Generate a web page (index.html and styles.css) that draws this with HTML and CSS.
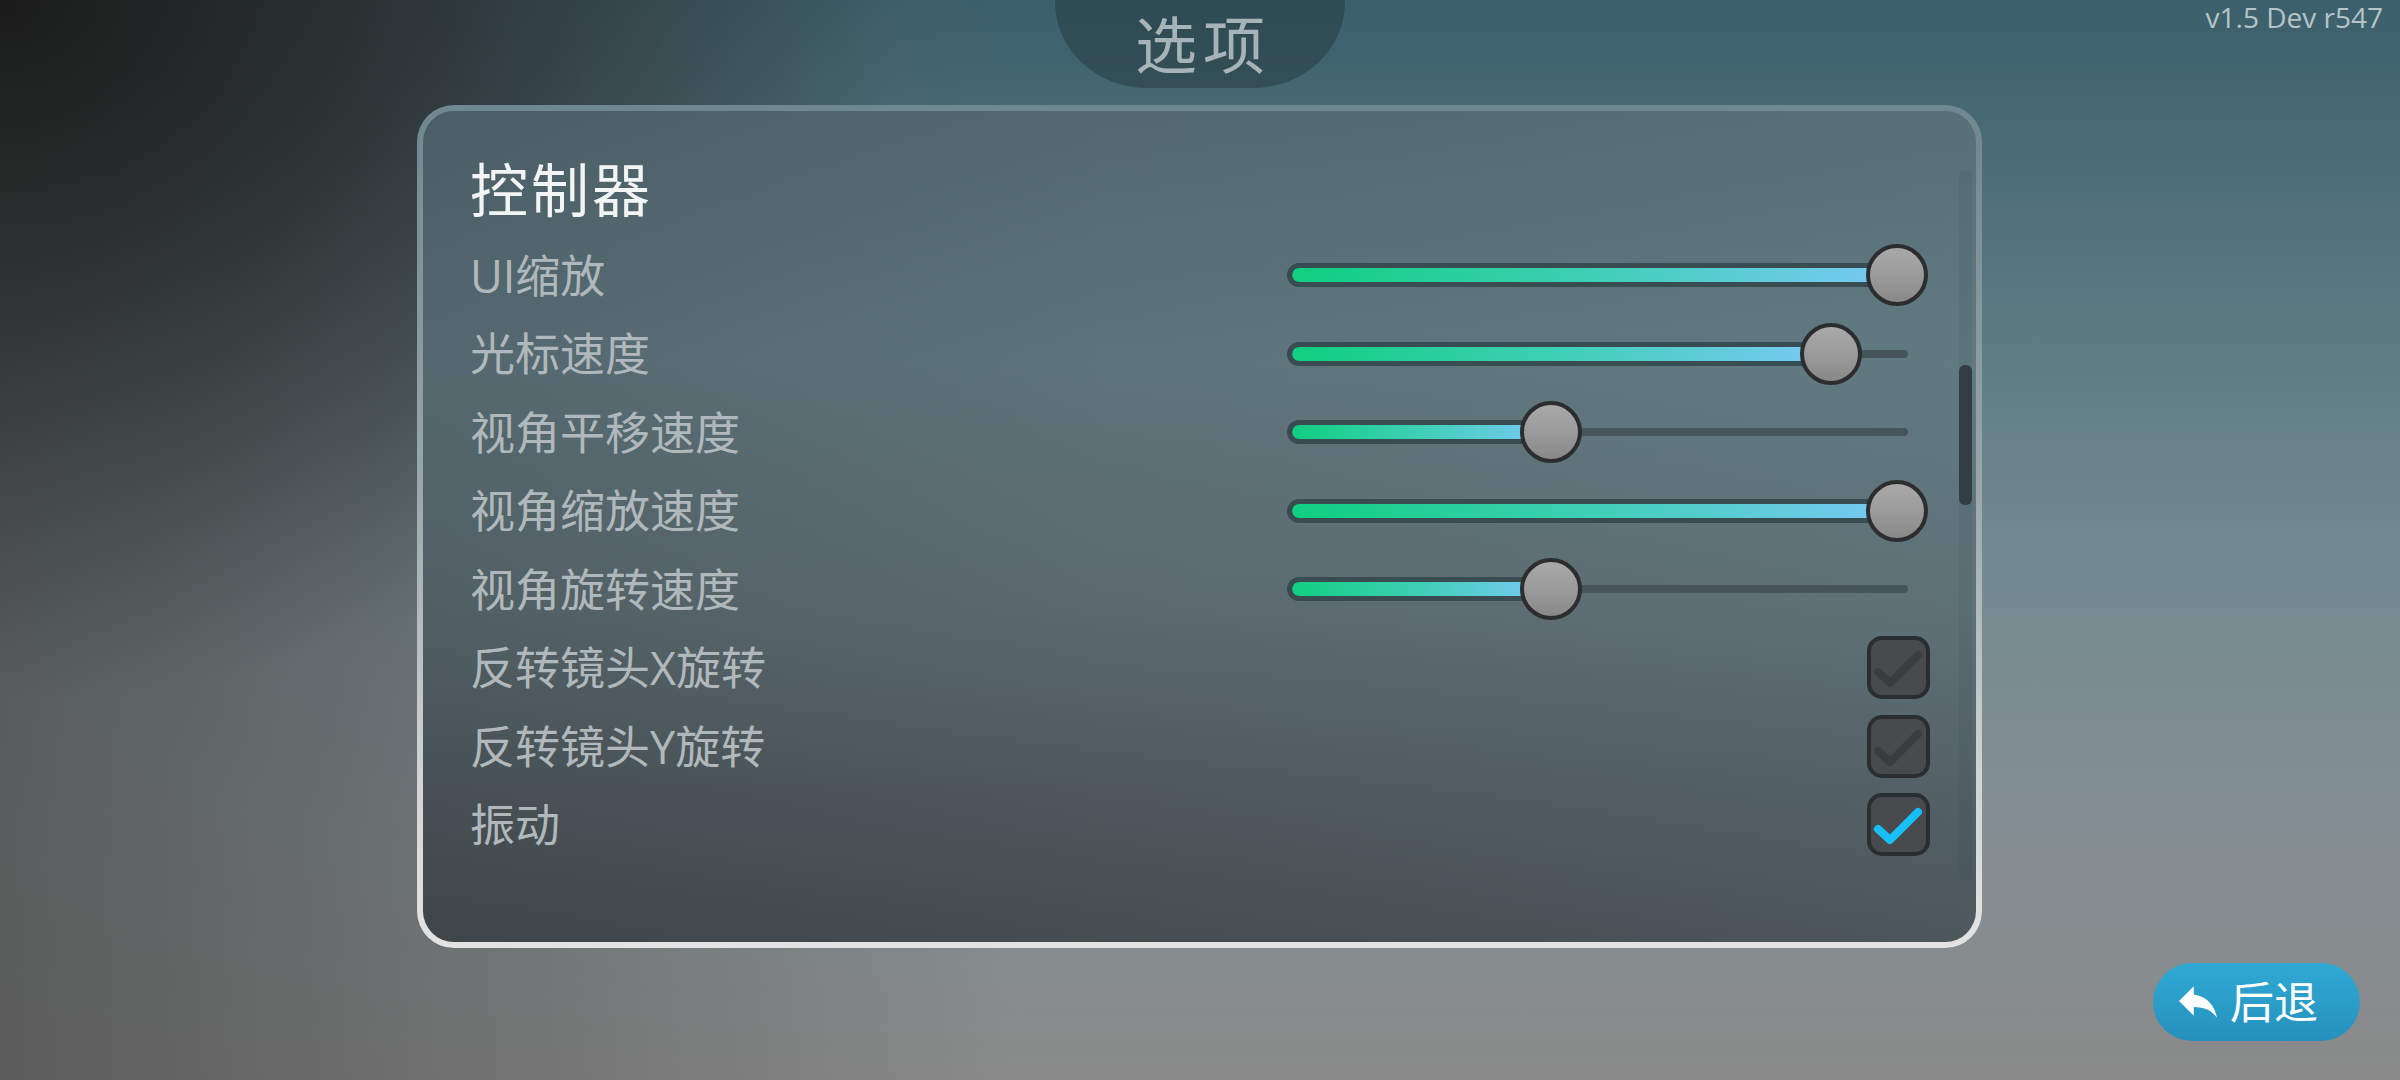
FILE: index.html
```html
<!DOCTYPE html>
<html lang="zh-CN">
<head>
<meta charset="utf-8">
<title>选项</title>
<link rel="stylesheet" href="styles.css">
</head>
<body>
<div class="screen">
  <header class="topbar">
    <div class="tab">选项</div>
    <div class="version">v1.5 Dev r547</div>
  </header>

  <main class="panel-frame">
    <div class="panel">
      <div class="content">
        <h1 class="section-title">控制器</h1>

        <div class="row">
          <span class="label">UI缩放</span>
          <div class="slider" style="--v:1">
            <div class="fill"></div><div class="thumb"></div>
          </div>
        </div>
        <div class="row">
          <span class="label">光标速度</span>
          <div class="slider" style="--v:0.886">
            <div class="fill"></div><div class="thumb"></div>
          </div>
        </div>
        <div class="row">
          <span class="label">视角平移速度</span>
          <div class="slider" style="--v:0.402">
            <div class="fill"></div><div class="thumb"></div>
          </div>
        </div>
        <div class="row">
          <span class="label">视角缩放速度</span>
          <div class="slider" style="--v:1">
            <div class="fill"></div><div class="thumb"></div>
          </div>
        </div>
        <div class="row">
          <span class="label">视角旋转速度</span>
          <div class="slider" style="--v:0.402">
            <div class="fill"></div><div class="thumb"></div>
          </div>
        </div>

        <div class="row">
          <span class="label">反转镜头X旋转</span>
          <div class="checkbox">
            <svg viewBox="4 4 55 55" width="55" height="55"><polyline points="11,36 23,47 51,19"/></svg>
          </div>
        </div>
        <div class="row">
          <span class="label">反转镜头Y旋转</span>
          <div class="checkbox">
            <svg viewBox="4 4 55 55" width="55" height="55"><polyline points="11,36 23,47 51,19"/></svg>
          </div>
        </div>
        <div class="row">
          <span class="label">振动</span>
          <div class="checkbox checked">
            <svg viewBox="4 4 55 55" width="55" height="55"><polyline points="11,36 23,47 51,19"/></svg>
          </div>
        </div>
      </div>
      <div class="scrolltrack"><div class="scrollthumb"></div></div>
    </div>
  </main>

  <footer class="footer">
    <button class="back">
      <svg class="back-icon" viewBox="3 5 18 15" width="38" height="32"><path d="M10 9V5l-7 7 7 7v-4.1c5 0 8.5 1.6 11 5.1-1-5-4-10-11-11z"/></svg>
      <span class="back-text">后退</span>
    </button>
  </footer>
</div>
</body>
</html>
```

FILE: styles.css
```css
html, body {
  margin: 0;
  padding: 0;
}

body {
  width: 2400px;
  height: 1080px;
  overflow: hidden;
  font-family: "Open Sans", "Noto Sans CJK SC", sans-serif;
}

.screen {
  width: 2400px;
  height: 1080px;
  display: flex;
  flex-direction: column;
  background:
    radial-gradient(ellipse 900px 700px at 0 0, rgba(24,24,24,0.95) 0%, rgba(24,24,24,0.6) 40%, rgba(24,24,24,0) 100%),
    linear-gradient(90deg, rgba(80,80,80,0.8) 0%, rgba(80,80,80,0.45) 18%, rgba(80,80,80,0) 42%),
    linear-gradient(180deg, #3b606b 0%, #56767f 25%, #718990 50%, #838f93 75%, #8a8a8a 100%);
}

/* ---------- top bar ---------- */
.topbar {
  height: 105px;
  display: grid;
  grid-template-columns: 1fr 290px 1fr;
  align-items: start;
  flex: none;
}

.tab {
  grid-column: 2;
  height: 88px;
  box-sizing: border-box;
  padding: 3px 0 0 6px;
  line-height: 85px;
  text-align: center;
  font-size: 62px;
  letter-spacing: 6px;
  color: #a6b3b7;
  background: rgba(28, 42, 48, 0.4);
  border-radius: 0 0 92px 92px / 0 0 86px 86px;
}

.version {
  grid-column: 3;
  justify-self: end;
  margin-top: 1px;
  padding-right: 17px;
  font-size: 28px;
  line-height: 32px;
  color: #b6c3c7;
}

/* ---------- panel ---------- */
.panel-frame {
  flex: none;
  margin-left: 417px;
  width: 1565px;
  height: 843px;
  box-sizing: border-box;
  padding: 6px;
  border-radius: 37px;
  background: linear-gradient(180deg, #6f878f 0%, #9aa6aa 45%, #d2d4d4 80%, #e3e3e3 100%);
}

.panel {
  height: 100%;
  border-radius: 31px;
  display: flex;
  overflow: hidden;
  background:
    linear-gradient(90deg, rgba(20,30,34,0.14) 0%, rgba(20,30,34,0) 45%, rgba(120,165,180,0.12) 100%),
    linear-gradient(180deg, #536870 0%, #5e747b 30%, #5b6a6f 60%, #4e585c 82%, #464c4f 100%);
}

.content {
  flex: 1;
  padding: 44px 29px 0 47px;
}

.section-title {
  margin: 0 0 11px;
  font-size: 58px;
  line-height: 70px;
  font-weight: normal;
  letter-spacing: 3px;
  color: #f3f4f4;
}

.row {
  height: 78.5px;
  display: flex;
  align-items: center;
  justify-content: space-between;
}

.label {
  font-size: 45px;
  line-height: 1;
  color: #b0b8bb;
}

/* ---------- slider ---------- */
.slider {
  position: relative;
  width: 643px;
  height: 62px;
}

.slider::before {
  content: "";
  position: absolute;
  left: 0;
  top: 27px;
  width: 621px;
  height: 8px;
  border-radius: 4px;
  background: #46555a;
}

.fill {
  position: absolute;
  left: 0;
  top: 19px;
  width: calc(31px + var(--v) * 579px);
  height: 24px;
  box-sizing: border-box;
  border: 5px solid rgba(52, 72, 78, 0.9);
  border-radius: 12px;
  background: linear-gradient(90deg, #10cf80 0%, #3fcfb6 50%, #79c9f4 100%);
  background-clip: padding-box;
}

.thumb {
  position: absolute;
  top: 0;
  left: calc(var(--v) * 579px);
  width: 62px;
  height: 62px;
  box-sizing: border-box;
  border: 4px solid #2c2d2e;
  border-radius: 50%;
  background: linear-gradient(180deg, #a9a9a9 0%, #9b9b9b 50%, #888888 100%);
}

/* ---------- checkbox ---------- */
.checkbox {
  width: 63px;
  height: 63px;
  box-sizing: border-box;
  border: 4px solid #2b2e30;
  border-radius: 15px;
  background: #474b4d;
  display: flex;
}

.checkbox svg polyline {
  fill: none;
  stroke: #3a3d3f;
  stroke-width: 8;
  stroke-linecap: round;
  stroke-linejoin: round;
}

.checkbox.checked svg polyline {
  stroke: #17bff7;
}

/* ---------- scrollbar ---------- */
.scrolltrack {
  flex: none;
  width: 13px;
  margin: 59px 4px 0 0;
  height: 710px;
  border-radius: 6px;
  background: rgba(30, 45, 50, 0.08);
}

.scrollthumb {
  margin-top: 195px;
  height: 140px;
  border-radius: 6px;
  background: #323e43;
}

/* ---------- footer ---------- */
.footer {
  flex: none;
  display: flex;
  justify-content: flex-end;
  padding: 15px 40px 0 0;
}

.back {
  width: 207px;
  height: 78px;
  border: none;
  border-radius: 39px;
  padding: 0 0 0 26px;
  display: flex;
  align-items: center;
  gap: 13px;
  background: linear-gradient(180deg, #31a9d5 0%, #2a9cc8 55%, #2590bb 100%);
  cursor: pointer;
  font-family: "Open Sans", "Noto Sans CJK SC", sans-serif;
}

.back-icon {
  flex: none;
  fill: #ffffff;
}

.back-text {
  font-size: 44px;
  line-height: 1;
  color: #ffffff;
}
```
